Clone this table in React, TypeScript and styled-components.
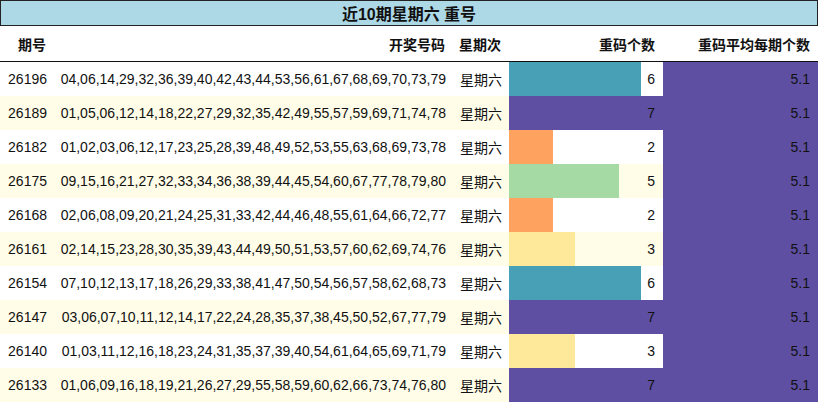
import React from "react";
import styled, { createGlobalStyle } from "styled-components";

const Global = createGlobalStyle`
  html, body { margin: 0; padding: 0; background: #ffffff; }
  body { font-family: "Liberation Sans", Arial, "Noto Sans CJK SC", sans-serif; color: #111; }
`;

const Wrap = styled.div`
  width: 818px;
`;

const Title = styled.div`
  height: 24px;
  border: 1px solid #222;
  background: #add8e6;
  display: flex;
  align-items: center;
  justify-content: center;
  font-weight: bold;
  font-size: 16px;
  color: #111;
`;

const Grid = styled.div`
  display: grid;
  grid-template-columns: 54px 399px 56px 154px 155px;
`;

const HeadCell = styled.div`
  height: 35px;
  border-bottom: 1px solid #111;
  display: flex;
  align-items: center;
  justify-content: flex-end;
  padding-right: 8px;
  font-weight: bold;
  font-size: 14px;
`;

const Cell = styled.div<{ $alt: boolean }>`
  height: 34px;
  display: flex;
  align-items: center;
  justify-content: flex-end;
  padding-right: 7px;
  font-size: 14px;
  background: ${(p) => (p.$alt ? "#fffde8" : "#ffffff")};
`;

const BarCell = styled(Cell)<{ $pct: number; $color: string }>`
  padding-right: 8px;
  background: ${(p) =>
    `linear-gradient(to right, ${p.$color} 0, ${p.$color} ${p.$pct}%, transparent ${p.$pct}%), ${
      p.$alt ? "#fffde8" : "#ffffff"
    }`};
`;

const AvgCell = styled(Cell)`
  padding-right: 8px;
  background: #5e4fa2;
`;

const colors: Record<number, string> = {
  2: "#fda35f",
  3: "#fee89a",
  5: "#a6daa5",
  6: "#48a0b6",
  7: "#5e4fa2",
};

const rows: [string, string, number][] = [
  ["26196", "04,06,14,29,32,36,39,40,42,43,44,53,56,61,67,68,69,70,73,79", 6],
  ["26189", "01,05,06,12,14,18,22,27,29,32,35,42,49,55,57,59,69,71,74,78", 7],
  ["26182", "01,02,03,06,12,17,23,25,28,39,48,49,52,53,55,63,68,69,73,78", 2],
  ["26175", "09,15,16,21,27,32,33,34,36,38,39,44,45,54,60,67,77,78,79,80", 5],
  ["26168", "02,06,08,09,20,21,24,25,31,33,42,44,46,48,55,61,64,66,72,77", 2],
  ["26161", "02,14,15,23,28,30,35,39,43,44,49,50,51,53,57,60,62,69,74,76", 3],
  ["26154", "07,10,12,13,17,18,26,29,33,38,41,47,50,54,56,57,58,62,68,73", 6],
  ["26147", "03,06,07,10,11,12,14,17,22,24,28,35,37,38,45,50,52,67,77,79", 7],
  ["26140", "01,03,11,12,16,18,23,24,31,35,37,39,40,54,61,64,65,69,71,79", 3],
  ["26133", "01,06,09,16,18,19,21,26,27,29,55,58,59,60,62,66,73,74,76,80", 7],
];

export default function App() {
  return (
    <Wrap>
      <Global />
      <Title>近10期星期六 重号</Title>
      <Grid>
        <HeadCell>期号</HeadCell>
        <HeadCell>开奖号码</HeadCell>
        <HeadCell>星期次</HeadCell>
        <HeadCell>重码个数</HeadCell>
        <HeadCell>重码平均每期个数</HeadCell>
        {rows.map(([id, nums, n], i) => {
          const alt = i % 2 === 1;
          return (
            <React.Fragment key={id}>
              <Cell $alt={alt}>{id}</Cell>
              <Cell $alt={alt}>{nums}</Cell>
              <Cell $alt={alt}>星期六</Cell>
              <BarCell $alt={alt} $pct={(n / 7) * 100} $color={colors[n]}>
                {n}
              </BarCell>
              <AvgCell $alt={alt}>5.1</AvgCell>
            </React.Fragment>
          );
        })}
      </Grid>
    </Wrap>
  );
}
